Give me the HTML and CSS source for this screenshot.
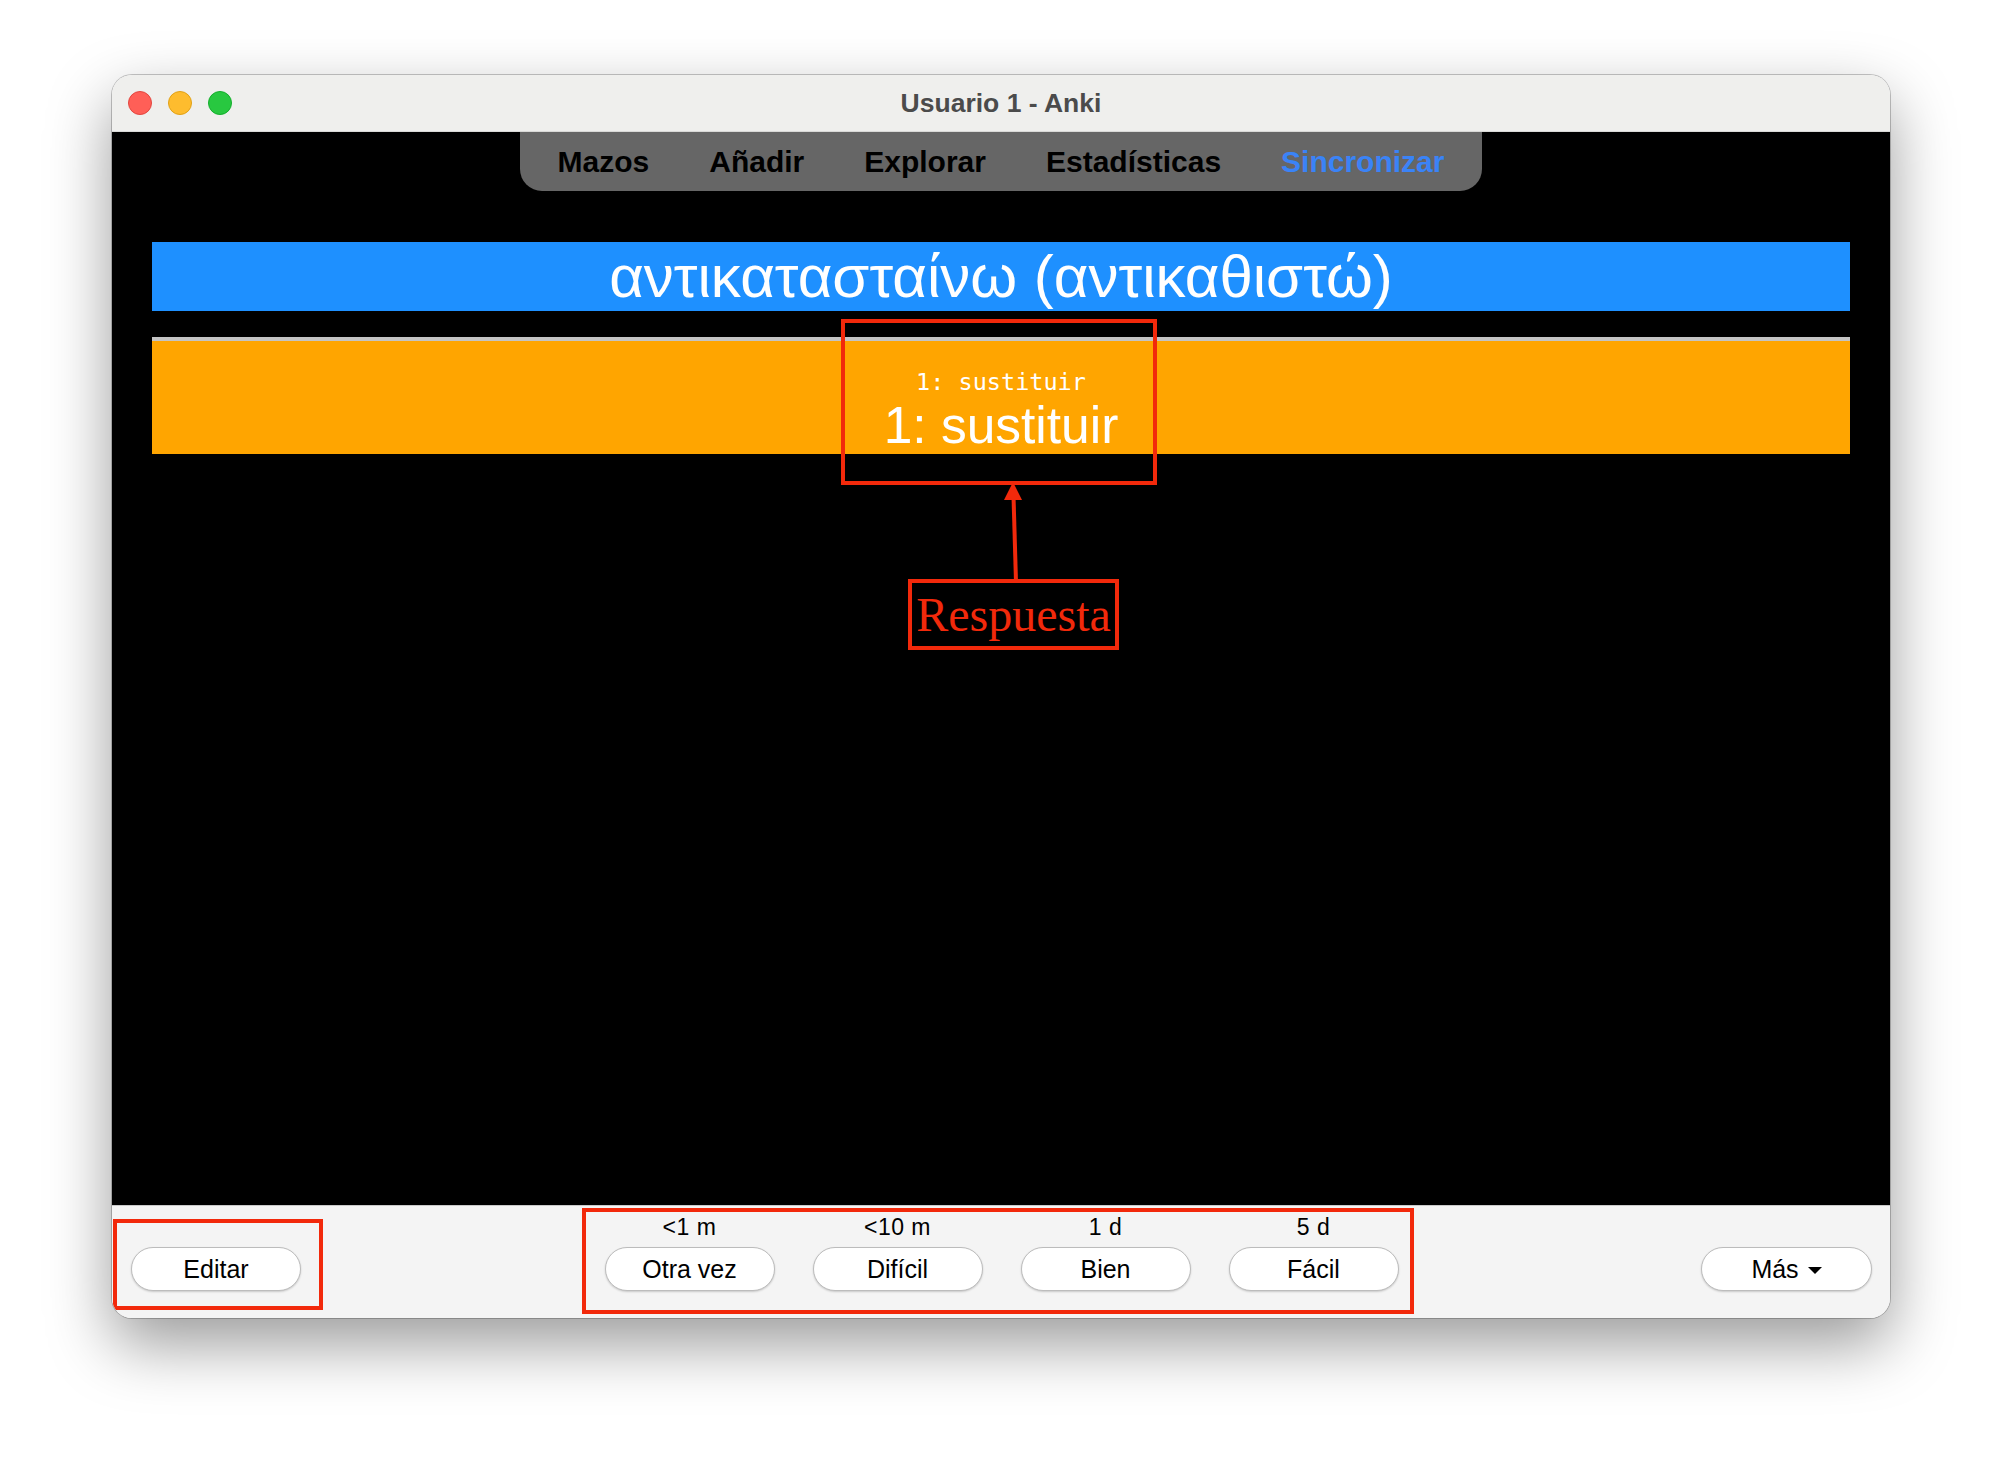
FILE: index.html
```html
<!DOCTYPE html>
<html lang="es">
<head>
<meta charset="utf-8">
<title>Usuario 1 - Anki</title>
<link rel="stylesheet" href="styles.css">
</head>
<body>
<div class="window">
  <div class="titlebar">
    <div class="lights">
      <span class="light red"></span>
      <span class="light yellow"></span>
      <span class="light green"></span>
    </div>
    <div class="title">Usuario 1 - Anki</div>
    <div></div>
  </div>
  <div class="content">
    <nav class="toolbar">
      <span class="tab">Mazos</span>
      <span class="tab">Añadir</span>
      <span class="tab">Explorar</span>
      <span class="tab">Estadísticas</span>
      <span class="tab sync">Sincronizar</span>
    </nav>
    <div class="front">αντικατασταίνω (αντικαθιστώ)</div>
    <div class="back">
      <div class="mono">1: sustituir</div>
      <div class="big">1: sustituir</div>
    </div>
  </div>
  <div class="bottombar">
    <div class="left"><button class="btn">Editar</button></div>
    <div class="ratings">
      <div class="rating"><span class="due">&lt;1 m</span><button class="btn">Otra vez</button></div>
      <div class="rating"><span class="due">&lt;10 m</span><button class="btn">Difícil</button></div>
      <div class="rating"><span class="due">1 d</span><button class="btn">Bien</button></div>
      <div class="rating"><span class="due">5 d</span><button class="btn">Fácil</button></div>
    </div>
    <div class="right"><button class="btn more">Más <span class="caret"></span></button></div>
  </div>

  <div class="mark mark-answer"></div>
  <svg class="arrow" width="40" height="110" viewBox="0 0 40 110">
    <line x1="28" y1="104" x2="25.5" y2="18" stroke="#f2290b" stroke-width="4"/>
    <polygon points="25,4 16,22 34,22" fill="#f2290b"/>
  </svg>
  <div class="mark mark-label">Respuesta</div>
  <div class="mark mark-edit"></div>
  <div class="mark mark-ratings"></div>
</div>
</body>
</html>
```

FILE: styles.css
```css
html, body {
  margin: 0;
  padding: 0;
  background: #ffffff;
}
body {
  min-height: 1466px;
  box-sizing: border-box;
  padding: 75px 0 0 112px;
  font-family: "Liberation Sans", Arial, sans-serif;
}
.window {
  position: relative;
  width: 1778px;
  height: 1243px;
  border-radius: 20px;
  overflow: hidden;
  box-shadow: 0 0 0 1px rgba(0,0,0,0.22), 0 26px 64px rgba(0,0,0,0.4);
  display: flex;
  flex-direction: column;
}
.titlebar {
  height: 57px;
  flex: none;
  box-sizing: border-box;
  background: #efefed;
  border-bottom: 1px solid #d9d9d7;
  display: grid;
  grid-template-columns: 1fr auto 1fr;
  align-items: center;
}
.lights {
  display: flex;
  gap: 16px;
  padding-left: 16px;
}
.light {
  width: 24px;
  height: 24px;
  border-radius: 50%;
  box-sizing: border-box;
}
.red { background: #ff5f57; border: 1px solid #e2463f; }
.yellow { background: #febc2e; border: 1px solid #e1a116; }
.green { background: #28c840; border: 1px solid #14ae2c; }
.title {
  font-weight: bold;
  font-size: 26.5px;
  color: #4b4b4b;
}
.content {
  height: 1073px;
  flex: none;
  background: #000;
  display: flex;
  flex-direction: column;
  align-items: center;
}
.toolbar {
  height: 59px;
  background: #666666;
  border-radius: 0 0 22px 22px;
  display: flex;
  align-items: center;
  gap: 60px;
  padding: 0 38px;
  box-sizing: border-box;
}
.tab {
  font-weight: bold;
  font-size: 30px;
  color: #000;
}
.tab.sync { color: #3a83f7; }
.front {
  align-self: stretch;
  margin: 51px 40px 0;
  height: 69px;
  box-sizing: border-box;
  padding-top: 5px;
  background: #1e90ff;
  color: #fff;
  text-align: center;
  font-size: 60px;
  line-height: 60px;
  white-space: nowrap;
}
.back {
  align-self: stretch;
  margin: 26px 40px 0;
  background: #ffa500;
  border-top: 4px solid #c4c4c4;
  padding-top: 27px;
  color: #fff;
  text-align: center;
}
.mono {
  font-family: "DejaVu Sans Mono", "Liberation Mono", monospace;
  font-size: 23.5px;
  line-height: 28px;
}
.big {
  margin-top: 1px;
  font-size: 51.5px;
  line-height: 57px;
}
.bottombar {
  height: 113px;
  flex: none;
  box-sizing: border-box;
  background: #f4f4f4;
  border-top: 1px solid #c9c9c9;
  display: grid;
  grid-template-columns: 1fr auto 1fr;
  align-items: end;
  padding: 0 18px 27px 19px;
}
.left { justify-self: start; }
.right { justify-self: end; }
.btn {
  width: 170px;
  height: 44px;
  border-radius: 22px;
  border: 1px solid #bcbcbc;
  background: #fff;
  box-shadow: 0 1px 2px rgba(0,0,0,0.18);
  font-family: "Liberation Sans", Arial, sans-serif;
  font-size: 25px;
  color: #000;
  display: flex;
  align-items: center;
  justify-content: center;
  padding: 0;
}
.btn.more { width: 171px; gap: 9px; }
.caret {
  width: 0;
  height: 0;
  border-left: 7px solid transparent;
  border-right: 7px solid transparent;
  border-top: 7px solid #000;
  margin-top: 3px;
}
.ratings {
  display: flex;
  gap: 38px;
}
.rating {
  display: flex;
  flex-direction: column;
  align-items: center;
}
.due {
  font-size: 23px;
  letter-spacing: 0.5px;
  line-height: 24px;
  margin-bottom: 8px;
  color: #000;
}
.mark {
  position: absolute;
  box-sizing: border-box;
  border: 4px solid #f2290b;
}
.mark-answer { left: 729px; top: 244px; width: 316px; height: 166px; }
.mark-label {
  left: 796px; top: 504px; width: 211px; height: 71px;
  display: flex;
  align-items: center;
  justify-content: center;
  font-family: "Liberation Serif", "Times New Roman", serif;
  font-size: 48px;
  line-height: 48px;
  color: #f2290b;
}
.mark-edit { left: 1px; top: 1144px; width: 210px; height: 91px; }
.mark-ratings { left: 470px; top: 1133px; width: 832px; height: 106px; }
.arrow {
  position: absolute;
  left: 876px;
  top: 403px;
}
```
